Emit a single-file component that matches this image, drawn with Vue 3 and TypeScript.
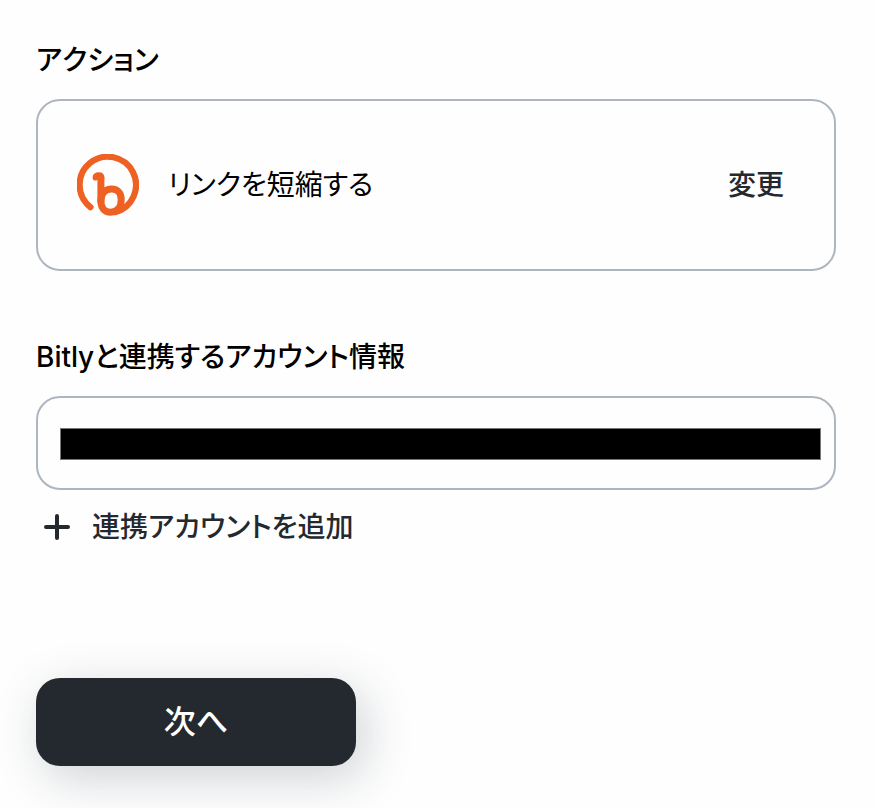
<script setup lang="ts">
import { ref } from 'vue'

const account = ref('')
</script>

<template>
  <main class="page">
    <section class="group" aria-labelledby="action-title">
      <h2 id="action-title" class="title">アクション</h2>
      <div class="card">
        <svg class="logo" viewBox="0 0 62 62" fill="none" stroke="#ee6123" stroke-linecap="round" stroke-linejoin="round" aria-hidden="true">
          <path d="M13.500 53.200A28.200 28.200 0 1 1 38 58.200" stroke-width="6.200" />
          <path d="M18.400 23.700C18.400 21.700 20 21 22 21C24 21 24.600 22 24.600 24" stroke-width="5.600" />
          <path d="M23.900 24V47" stroke-width="7" />
          <path d="M23.900 47C23.900 39 28.500 35 34.800 35C40.500 35 44.200 39 44.200 45.500C44.200 53.500 40 58.200 33.600 58.200C27.500 58.200 23.900 54 23.900 47Z" stroke-width="7" />
        </svg>
        <span class="action">リンクを短縮する</span>
        <button type="button" class="change">変更</button>
      </div>
    </section>

    <section class="group account">
      <label class="title" for="account">Bitlyと連携するアカウント情報</label>
      <div class="field">
        <select id="account" v-model="account" class="select">
          <option value=""></option>
        </select>
      </div>
      <button type="button" class="add">
        <svg class="plus" viewBox="0 0 28 28" fill="none" stroke="currentColor" stroke-width="4" stroke-linecap="round" aria-hidden="true">
          <path d="M14 3V25M3 14H25" />
        </svg>
        <span>連携アカウントを追加</span>
      </button>
    </section>

    <button type="button" class="next">次へ</button>
  </main>
</template>

<style>
body {
  background: #fefefe;
}
</style>

<style scoped>
.page {
  padding: 40px 40px 42px 36px;
  font-family: Inter, "Noto Sans CJK JP", sans-serif;
  font-size: 28px;
  line-height: 40px;
  font-feature-settings: "palt";
  font-kerning: none;
  color: #000;
}
.group {
  display: flex;
  flex-direction: column;
}
.title {
  margin: 0 0 19px;
  font-size: 28px;
  font-weight: 500;
  line-height: 40px;
}
.card {
  display: flex;
  align-items: center;
  gap: 29px;
  padding: 53px 50px 53px 39px;
  border: 2px solid #adb5bf;
  border-radius: 24px;
}
.logo {
  flex: none;
  width: 62px;
  height: 62px;
}
.action {
  flex: 1;
}
button {
  border: 0;
  background: none;
  font: inherit;
  font-feature-settings: inherit;
  font-kerning: inherit;
  cursor: pointer;
}
.change {
  padding: 0;
  color: #24292f;
  font-weight: 500;
}
.account {
  margin-top: 66px;
}
.field {
  display: flex;
  padding: 30px 13px 28px 22px;
  border: 2px solid #adb5bf;
  border-radius: 24px;
}
.select {
  flex: 1;
  height: 32px;
  appearance: none;
  border: 1px solid #777;
  border-radius: 0;
  background: #000;
  color: #000;
  font: inherit;
}
.add {
  display: flex;
  align-items: center;
  align-self: flex-start;
  gap: 21px;
  margin-top: 17px;
  padding: 0 0 0 7px;
  color: #24292f;
  font-weight: 500;
}
.plus {
  width: 28px;
  height: 28px;
}
.next {
  display: block;
  width: 40%;
  height: 88px;
  margin-top: 131px;
  border-radius: 24px;
  background: #24292f;
  color: #fff;
  font-size: 32px;
  font-weight: 500;
  box-shadow: 8px 12px 48px rgba(36, 50, 64, 0.22);
}
</style>
